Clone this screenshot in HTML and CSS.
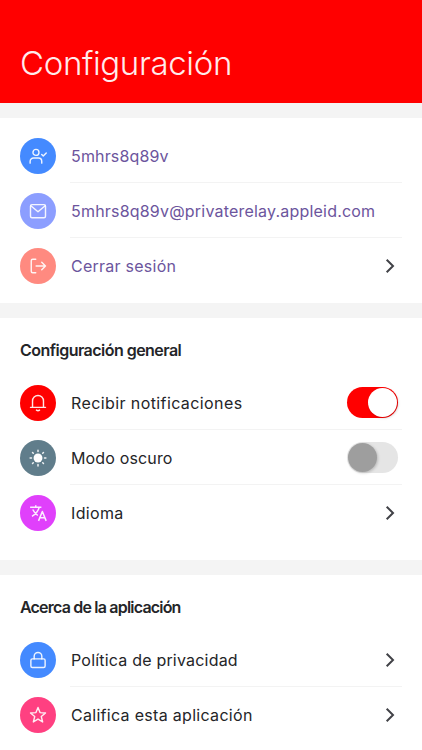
FILE: index.html
```
<!DOCTYPE html>
<html lang="es">
<head>
  <meta charset="UTF-8">
  <meta name="viewport" content="width=device-width, initial-scale=1">
  <title>Configuración</title>
  <link rel="stylesheet" href="styles.css">
</head>
<body>
  <header class="header">
    <h1>Configuración</h1>
  </header>

  <section class="section account">
    <div class="row">
      <span class="icon blue">
        <svg viewBox="0 0 24 24"><circle cx="9.3" cy="7.2" r="4"/><path d="M1.500 21.500v-2.300a4.500 4.500 0 0 1 4.500-4.500h6.500a4.500 4.500 0 0 1 4.500 4.500v2.300M17 10l2 2 4-4"/></svg>
      </span>
      <div class="content"><span class="label user">5mhrs8q89v</span></div>
    </div>
    <div class="row">
      <span class="icon violet">
        <svg viewBox="0 0 24 24"><rect x="2" y="3.5" width="20" height="17.5" rx="2"/><path d="M2.5 5l9.500 8L21.500 5"/></svg>
      </span>
      <div class="content"><span class="label email">5mhrs8q89v@privaterelay.appleid.com</span></div>
    </div>
    <div class="row">
      <span class="icon coral">
        <svg viewBox="0 0 24 24"><path d="M9 3H5a2 2 0 0 0-2 2v14a2 2 0 0 0 2 2h4M9.500 12H22M17 7l5 5-5 5"/></svg>
      </span>
      <div class="content">
        <span class="label logout">Cerrar sesión</span>
        <svg class="chevron" viewBox="0 0 10 16"><path d="M1.700 1.700L8 8l-6.300 6.300"/></svg>
      </div>
    </div>
  </section>

  <section class="section general">
    <h2 class="title-general">Configuración general</h2>
    <div class="row">
      <span class="icon red">
        <svg viewBox="0 0 24 24"><path d="M2 17.800h20M4.700 17.500V9.300a7.300 7.300 0 0 1 14.600 0v8.200M10 21.500q2 1.600 4 0"/></svg>
      </span>
      <div class="content">
        <span class="label notifications">Recibir notificaciones</span>
        <span class="switch on"></span>
      </div>
    </div>
    <div class="row">
      <span class="icon slate">
        <svg viewBox="0 0 24 24"><circle class="solid" cx="12" cy="12" r="5.900"/><path class="rays" d="M12 1.500v1.800M12 20.700v1.800M1.500 12h1.800M20.700 12h1.800M4.700 4.700l1 1M18.300 18.300l1 1M4.700 19.300l1-1M18.300 5.700l1-1"/></svg>
      </span>
      <div class="content">
        <span class="label dark-mode">Modo oscuro</span>
        <span class="switch"></span>
      </div>
    </div>
    <div class="row">
      <span class="icon magenta">
        <svg viewBox="0 0 24 24"><path class="translate" d="M1.500 4.300h15M9 1.500v2.800M13.500 4.500c-1 4.700-4.500 8.800-9.500 12M5 7.300c1.500 3.300 3.700 5.500 6.700 8M12.700 22.500L17.800 10l5.100 12.500M14.500 18.300h6.600"/></svg>
      </span>
      <div class="content">
        <span class="label language">Idioma</span>
        <svg class="chevron" viewBox="0 0 10 16"><path d="M1.700 1.700L8 8l-6.300 6.300"/></svg>
      </div>
    </div>
  </section>

  <section class="section about">
    <h2 class="title-about">Acerca de la aplicación</h2>
    <div class="row">
      <span class="icon blue">
        <svg viewBox="0 0 24 24"><rect x="2.500" y="10.500" width="19" height="11.500" rx="2"/><path d="M6.900 10.500V7a5.100 5.100 0 0 1 10.200 0v3.500"/></svg>
      </span>
      <div class="content">
        <span class="label privacy">Política de privacidad</span>
        <svg class="chevron" viewBox="0 0 10 16"><path d="M1.700 1.700L8 8l-6.300 6.300"/></svg>
      </div>
    </div>
    <div class="row">
      <span class="icon pink">
        <svg viewBox="0 0 24 24"><path d="M12 2l2.700 6.800 7.300.5-5.600 4.800 1.800 7.200L12 17.400l-6.200 3.900 1.800-7.200L2 9.300l7.300-.5z"/></svg>
      </span>
      <div class="content">
        <span class="label rate">Califica esta aplicación</span>
        <svg class="chevron" viewBox="0 0 10 16"><path d="M1.700 1.700L8 8l-6.300 6.300"/></svg>
      </div>
    </div>
  </section>
</body>
</html>
```
FILE: styles.css
```
body {
  margin: 0;
  height: 750px;
  overflow: hidden;
  display: flex;
  flex-direction: column;
  gap: 15px;
  background: #f4f4f4;
  color: #242528;
  font-family: Inter, "Liberation Sans", sans-serif;
}
.header {
  height: 103px;
  flex-shrink: 0;
  box-sizing: border-box;
  padding: 42px 20px 0;
  background: #ff0000;
}
h1 {
  margin: 0;
  color: #ffecec;
  font-size: 33px;
  font-weight: 300;
  line-height: 42px;
  letter-spacing: -0.35px;
}
.section {
  box-sizing: border-box;
  flex-shrink: 0;
  padding: 0 20px;
  background: #fff;
}
.account {
  height: 185px;
  padding-top: 10px;
  color: #6c559d;
}
.general {
  height: 242px;
}
.about {
  height: 175px;
}
h2 {
  margin: 0;
  padding: 20px 0 13px;
  font-size: 16px;
  font-weight: 600;
  line-height: 24px;
}
.title-general { letter-spacing: -0.53px; }
.title-about { letter-spacing: -0.8px; }
.row {
  display: flex;
  align-items: center;
  gap: 14px;
  height: 55px;
}
.icon {
  display: flex;
  align-items: center;
  justify-content: center;
  flex-shrink: 0;
  width: 36px;
  height: 36px;
  border-radius: 50%;
}
.icon svg {
  width: 18px;
  height: 18px;
  fill: none;
  stroke: #fff;
  stroke-opacity: 0.9;
  stroke-width: 1.9;
  stroke-linecap: round;
  stroke-linejoin: round;
}
.icon .solid {
  fill: #fff;
  stroke: none;
}
.icon .rays {
  stroke-width: 2;
}
.icon .translate {
  stroke-width: 2;
  stroke-linecap: butt;
}
.blue { background: #448aff; }
.violet { background: #8c9eff; }
.coral { background: #ff8a80; }
.red { background: #ff0000; }
.slate { background: #607d8b; }
.magenta { background: #e040fb; }
.pink { background: #ff4081; }

.content {
  display: flex;
  align-items: center;
  justify-content: space-between;
  flex: 1;
  height: 100%;
  box-sizing: border-box;
  padding: 0 4.5px 0 1px;
  border-bottom: 1px solid #f3f3f3;
}
.row:last-child .content {
  border-bottom-color: transparent;
}
.label {
  padding-top: 2px;
  font-size: 16px;
  line-height: 24px;
  white-space: nowrap;
}
.user { letter-spacing: 0.15px; }
.email { letter-spacing: 0.2px; }
.logout { letter-spacing: 0.25px; }
.notifications { letter-spacing: 0.4px; }
.dark-mode { letter-spacing: 0.15px; }
.language { letter-spacing: 0.35px; }
.privacy { letter-spacing: 0.2px; }
.rate { letter-spacing: 0.3px; }
.chevron {
  width: 10px;
  height: 16px;
  margin: 1px 2.5px 0 0;
  fill: none;
  stroke: #414247;
  stroke-width: 2;
}
.switch {
  display: flex;
  box-sizing: border-box;
  width: 50.5px;
  height: 31px;
  padding: 1px;
  border-radius: 16px;
  background: #e5e5e5;
}
.switch::before {
  content: "";
  width: 29px;
  height: 29px;
  border-radius: 50%;
  background: #9e9e9e;
  box-shadow: 1px 1px 3px rgba(0,0,0,0.2);
}
.switch.on {
  justify-content: flex-end;
  background: #ff0000;
}
.switch.on::before {
  background: #fff;
}
```
